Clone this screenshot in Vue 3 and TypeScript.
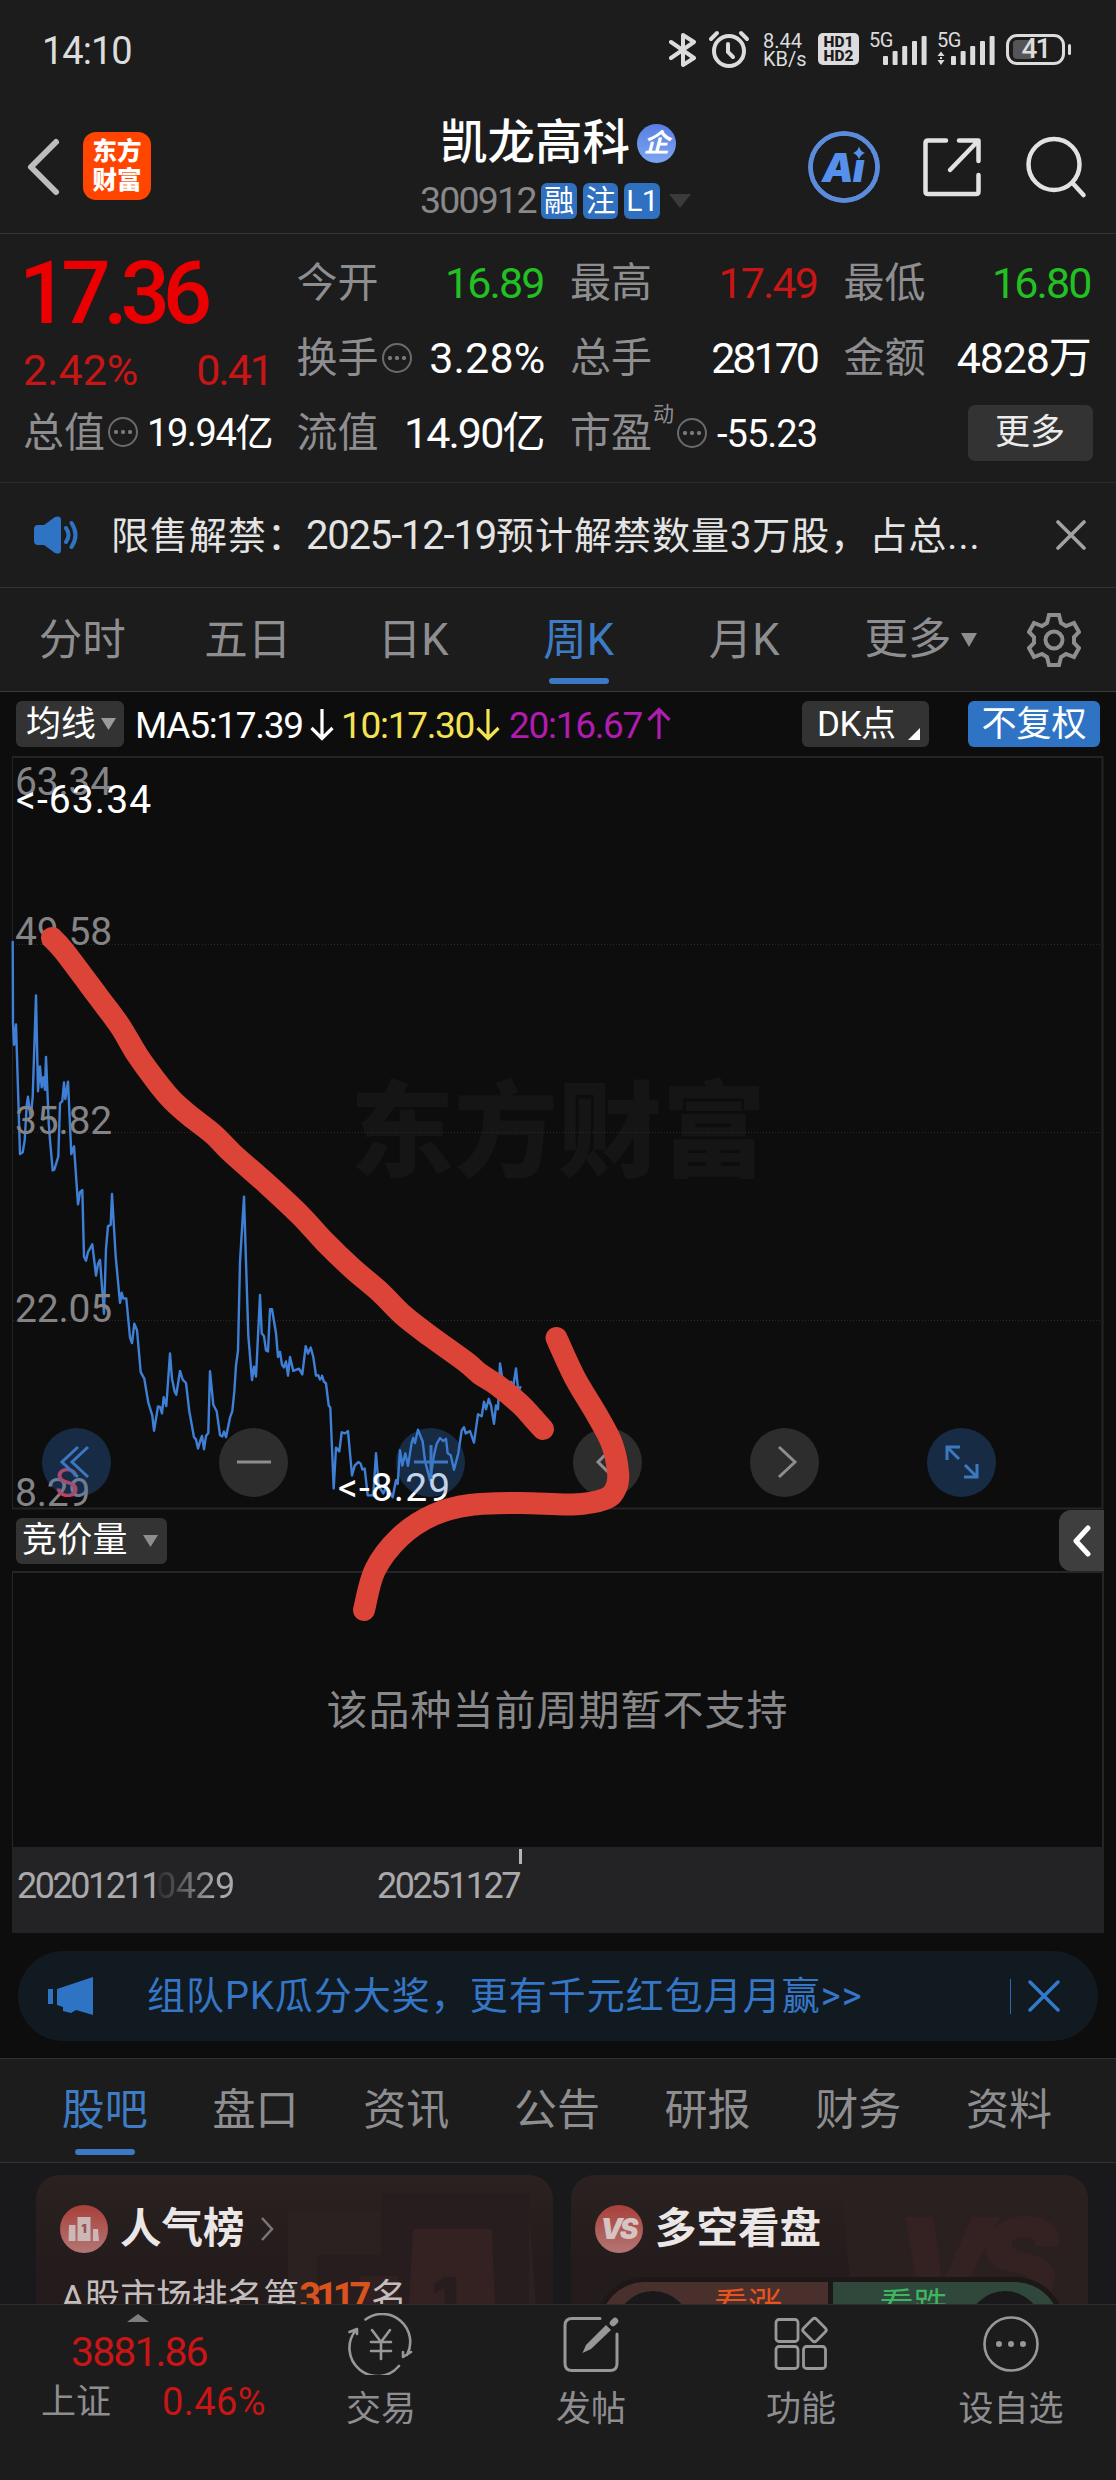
<script setup lang="ts">
type Point = [number, number]

interface Signal {
  arrows: boolean
}

const signals: Signal[] = [{ arrows: false }, { arrows: true }]
const periodTabs: string[] = ['分时', '五日', '日K', '周K', '月K']
const activePeriod = '周K'
const infoTabs: string[] = ['股吧', '盘口', '资讯', '公告', '研报', '财务', '资料']
const activeInfo = '股吧'

/* Price line, in chart pixels (origin at the chart's top-left corner, y 756) */
const firstHalf: Point[] = [
  [38, 141], [39, 330], [42, 380], [48, 333], [60, 632], [68, 628], [74, 600], [80, 520], [84, 500], [92, 548],
  [98, 500], [108, 266], [114, 487], [120, 430], [125, 478], [130, 455], [135, 484], [138, 408], [146, 560],
  [150, 600], [158, 670], [163, 668], [175, 638], [180, 515], [187, 510], [192, 467], [196, 505], [204, 465],
  [214, 632], [222, 614], [234, 748], [240, 720], [247, 715], [252, 868], [258, 878], [264, 858], [277, 840],
  [288, 912], [294, 885], [300, 876], [312, 1000], [318, 850], [324, 798], [332, 795], [336, 724], [347, 868],
  [360, 975], [365, 952], [370, 965], [379, 965], [390, 1055], [396, 1068], [403, 1023], [411, 1038], [422, 1135],
  [433, 1150], [445, 1205], [457, 1235], [462, 1270], [474, 1214], [480, 1215], [486, 1230], [491, 1193],
  [499, 1213], [510, 1092], [516, 1150], [524, 1180], [529, 1187], [540, 1132], [548, 1152], [558, 1160],
  [568, 1225], [582, 1285], [588, 1290], [594, 1311], [602, 1290], [606, 1282], [612, 1313], [618, 1282],
  [625, 1275], [630, 1133], [640, 1210], [650, 1225], [660, 1280], [667, 1283], [672, 1272], [678, 1285],
  [690, 1240], [697, 1225], [703, 1180], [708, 1120], [714, 1085], [720, 880], [732, 730], [738, 880],
  [745, 1050], [756, 1153], [762, 1122], [768, 1145], [780, 957], [785, 1045], [792, 1052], [798, 1085],
  [804, 1087], [810, 990], [816, 990], [828, 1045], [834, 1100], [840, 1088], [846, 1118], [852, 1124],
  [858, 1110], [864, 1143], [870, 1100], [880, 1132], [897, 1127], [907, 1140], [917, 1075], [924, 1092],
  [932, 1078], [940, 1100], [948, 1143], [955, 1142], [960, 1152], [966, 1146],
]
const secondHalf: Point[] = [
  [6, 877], [12, 893], [18, 897], [26, 955], [31, 960], [41, 1172], [48, 1065], [58, 1075], [65, 1025], [75, 1028],
  [84, 1022], [96, 1138], [104, 1112], [115, 1103], [122, 1107], [127, 1122], [134, 1120], [143, 1190],
  [160, 1190], [168, 1080], [176, 1165], [190, 1185], [200, 1165], [205, 1195], [212, 1185], [218, 1195],
  [228, 1150], [233, 1160], [240, 1072], [247, 1112], [256, 1080], [264, 1113], [275, 1052], [280, 1040],
  [285, 1053], [294, 1018], [308, 1050], [315, 1100], [330, 1150], [342, 1085], [350, 1055], [360, 1040],
  [370, 1048], [378, 1042], [383, 1080], [392, 1085], [402, 1123], [415, 1080], [425, 1020], [432, 1012],
  [437, 1028], [450, 1022], [462, 1052], [474, 978], [485, 983], [492, 945], [498, 965], [506, 938], [513, 955],
  [522, 1003], [528, 955], [534, 965], [540, 845], [548, 890], [560, 920], [573, 893], [580, 905], [588, 858],
  [595, 920], [602, 905],
]
const priceLine: string = [
  ...firstHalf.map(([x, y]): Point => [x / 3, 124 + y / 2.306]),
  ...secondHalf.map(([x, y]): Point => [320 + x / 3, 284 + y / 2.613]),
]
  .map(([x, y]) => `${x.toFixed(1)},${y.toFixed(1)}`)
  .join(' ')

const gridLines: number[] = [188, 376, 564]
const axisLabels = [
  { text: '63.34', y: 39 },
  { text: '49.58', y: 189 },
  { text: '35.82', y: 378 },
  { text: '22.05', y: 566 },
  { text: '8.29', y: 750 },
]

/* Catmull-Rom spline through the hand-drawn stroke's points */
function smooth(points: Point[]): string {
  let d = `M${points[0][0]} ${points[0][1]}`
  for (let i = 0; i < points.length - 1; i++) {
    const p0 = points[Math.max(i - 1, 0)]
    const p1 = points[i]
    const p2 = points[i + 1]
    const p3 = points[Math.min(i + 2, points.length - 1)]
    const c1 = [p1[0] + (p2[0] - p0[0]) / 6, p1[1] + (p2[1] - p0[1]) / 6]
    const c2 = [p2[0] - (p3[0] - p1[0]) / 6, p2[1] - (p3[1] - p1[1]) / 6]
    d += `C${c1[0].toFixed(1)} ${c1[1].toFixed(1)} ${c2[0].toFixed(1)} ${c2[1].toFixed(1)} ${p2[0]} ${p2[1]}`
  }
  return d
}
const arrowShaft = smooth([
  [52, 938], [64, 951], [97, 995], [120, 1026], [138, 1056], [160, 1086], [173, 1101], [190, 1116], [213, 1134],
  [233, 1154], [267, 1184], [300, 1215], [325, 1242], [353, 1269], [380, 1292], [403, 1315], [430, 1336],
  [466, 1362], [480, 1374], [497, 1385], [520, 1404], [533, 1418], [543, 1429],
])
const arrowHead = smooth([
  [556.5, 1338], [575, 1378], [597, 1415], [612, 1444], [618, 1472], [616, 1488], [605, 1499], [573, 1504.5],
  [520, 1503], [470, 1505], [433, 1515], [400, 1537], [375, 1570], [364, 1610],
])
</script>

<template>
  <div class="screen">
    <header class="status">
      <span class="clock">14:10</span>
      <div class="status-icons">
        <svg width="28" height="36" viewBox="0 0 28 36" fill="none" stroke="#dcdcdc" stroke-width="4" stroke-linejoin="round" stroke-linecap="round">
          <path d="M2 10 25 26 14 33V3L25 10 2 26" />
        </svg>
        <svg class="alarm" width="42" height="40" viewBox="0 0 42 40" fill="none" stroke="#dcdcdc" stroke-width="4" stroke-linecap="round">
          <circle cx="21" cy="22" r="15" />
          <path d="M20 15v8l5 5M3 10 9 4M39 10l-6-6" />
        </svg>
        <div class="speed"><span>8.44</span><span>KB/s</span></div>
        <div class="hd"><span>HD1</span><span>HD2</span></div>
        <div v-for="(s, i) in signals" :key="i" class="signal">
          <span class="net">5G</span>
          <svg width="58" height="34" viewBox="0 0 58 34" fill="#dcdcdc">
            <rect x="14" y="23" width="5" height="9" rx="1" />
            <rect x="23.6" y="18" width="5" height="14" rx="1" />
            <rect x="33.2" y="13" width="5" height="19" rx="1" />
            <rect x="43" y="8" width="5" height="24" rx="1" />
            <rect x="52.6" y="3" width="5" height="29" rx="1" />
            <path v-if="s.arrows" d="M.5 23 4 18.500 7.500 23zM.5 27 4 32 7.500 27zM3 24h2v2H3z" />
          </svg>
        </div>
        <div class="battery"><i></i><span>41</span></div>
      </div>
    </header>

    <div class="title-bar">
      <svg class="back" width="36" height="60" viewBox="0 0 36 60" fill="none" stroke="#bdbdbd" stroke-width="6" stroke-linecap="round" stroke-linejoin="round">
        <path d="M31 5 6 30 31 55" />
      </svg>
      <div class="logo"><span>东方</span><span>财富</span></div>
      <div class="stock">
        <div class="stock-name"><span>凯龙高科</span><i class="corp">企</i></div>
        <div class="stock-code">
          <span class="code">300912</span>
          <b class="tag">融</b><b class="tag">注</b><b class="tag">L1</b>
          <svg width="24" height="16" viewBox="0 0 24 16" fill="#3b3b3b"><path d="M1 1h22L12 15z" /></svg>
        </div>
      </div>
      <div class="actions">
        <svg width="74" height="74" viewBox="0 0 74 74">
          <circle cx="37" cy="37" r="33.500" fill="none" stroke="#5b8cdc" stroke-width="4.500" />
          <text x="15" y="52" class="ai">Ai</text>
          <path d="M44 13h20v16.500H44z" fill="#1c1c1c" />
          <path d="M52 16.500q1.500 5 6 6.500-4.500 1.500-6 6.500-1.500-5-6-6.500 4.500-1.500 6-6.500z" fill="#5590ec" />
          <circle cx="37" cy="37" r="33.500" fill="none" stroke="#5b8cdc" stroke-width="4.500" />
        </svg>
        <svg class="share" width="62" height="62" viewBox="0 0 62 62" fill="none" stroke="#e2e2e2" stroke-width="4.500" stroke-linecap="round" stroke-linejoin="round">
          <path d="M25 4.500H7q-2.500 0-2.500 2.500v48.500q0 2.500 2.500 2.500h48q2.500 0 2.500-2.500V39M38 4.500h19.500V25M56 6 29 34" />
        </svg>
        <svg class="search" width="62" height="66" viewBox="0 0 62 66" fill="none" stroke="#e2e2e2" stroke-width="4.500" stroke-linecap="round">
          <circle cx="29" cy="30.500" r="25.500" /><path d="m47.500 49 11 12" />
        </svg>
      </div>
    </div>

    <section class="quote">
      <div class="col main-col">
        <div class="price">17.36</div>
        <div class="row delta"><span>2.42%</span><span class="chg">0.41</span></div>
        <div class="row"><span class="label">总值</span><i class="more-dot"></i><span class="val small wan">19.94亿</span></div>
      </div>
      <div class="col">
        <div class="row"><span class="label">今开</span><span class="val down">16.89</span></div>
        <div class="row"><span class="label">换手</span><i class="more-dot"></i><span class="val pct">3.28%</span></div>
        <div class="row"><span class="label">流值</span><span class="val">14.90亿</span></div>
      </div>
      <div class="col">
        <div class="row"><span class="label">最高</span><span class="val up">17.49</span></div>
        <div class="row"><span class="label">总手</span><span class="val tight">28170</span></div>
        <div class="row"><span class="label">市盈</span><sup class="dyn">动</sup><i class="more-dot"></i><span class="val small">-55.23</span></div>
      </div>
      <div class="col">
        <div class="row"><span class="label">最低</span><span class="val down">16.80</span></div>
        <div class="row"><span class="label">金额</span><span class="val tight2">4828万</span></div>
        <div class="row end"><span class="more-btn">更多</span></div>
      </div>
    </section>

    <section class="notice">
      <svg class="speaker" width="44" height="38" viewBox="0 0 44 38" fill="#2f74c4">
        <path d="M4 9q-4 0-4 4v12q0 4 4 4h6l11 8q6 2 6-3V4q0-5-6-3L10 9z" />
        <path d="M32 12q5 7 0 14M37.500 7q8 12 0 24" fill="none" stroke="#2f74c4" stroke-width="4" stroke-linecap="round" />
      </svg>
      <p class="notice-text">限售解禁：<span class="date-num">2025-12-19</span>预计解禁数量<span>3</span>万股，占总...</p>
      <svg class="x" width="30" height="30" viewBox="0 0 30 30" stroke="#a2a2a2" stroke-width="3.600" stroke-linecap="round"><path d="m2 2 26 26M28 2 2 28" /></svg>
    </section>

    <nav class="periods">
      <span v-for="t in periodTabs" :key="t" class="period" :class="{ active: t === activePeriod }">{{ t }}</span>
      <span class="period more">更多<svg width="16" height="14" viewBox="0 0 16 14" fill="#8e8e91"><path d="M0 0h16L8 14z" /></svg></span>
      <svg class="gear" width="54" height="56" viewBox="0 0 54 56" fill="none" stroke="#8e8e91" stroke-width="4">
        <path d="M22 3h10l2 8 5 3 8-3 5 9-5 5v6l5 5-5 9-8-3-5 3-2 8H22l-2-8-5-3-8 3-5-9 5-5v-6l-5-5 5-9 8 3 5-3z" />
        <circle cx="27" cy="28" r="8.500" />
      </svg>
    </nav>

    <div class="ma-row">
      <span class="pill ma-pill">均线<svg width="15" height="12" viewBox="0 0 15 12" fill="#9b9b9d"><path d="M0 0h15L7.500 12z" /></svg></span>
      <span class="ma white">MA5:17.39</span>
      <svg class="arr" width="24" height="34" viewBox="0 0 24 34" stroke="#fff"><path d="M12 2v29M1.500 21 12 31.500 22.500 21" /></svg>
      <span class="ma yellow">10:17.30</span>
      <svg class="arr" width="24" height="34" viewBox="0 0 24 34" stroke="#f3e354"><path d="M12 2v29M1.500 21 12 31.500 22.500 21" /></svg>
      <span class="ma purple">20:16.67</span>
      <svg class="arr" width="24" height="34" viewBox="0 0 24 34" stroke="#b01cb0"><path d="M12 32V3M1.500 13 12 2.500 22.500 13" /></svg>
      <span class="pill dk">DK点<svg width="12" height="12" viewBox="0 0 12 12" fill="#fff"><path d="M12 0v12H0z" /></svg></span>
      <span class="pill adj">不复权</span>
    </div>

    <section class="chart">
      <svg width="1116" height="754" viewBox="0 0 1116 754">
        <text x="350" y="413" class="watermark">东方财富</text>
        <line v-for="y in gridLines" :key="y" x1="13" x2="1103" :y1="y + 0.5" :y2="y + 0.5" stroke="#2a2a2a" stroke-dasharray="1 2" />
        <path d="M12.500 752V1.500" fill="none" stroke="#242424" stroke-width="1" />
        <path d="M12 1h1090.500v751.500H12" fill="none" stroke="#242426" stroke-width="2" />
        <polyline :points="priceLine" fill="none" stroke="#3f80d6" stroke-width="2.400" stroke-linejoin="round" />
        <text v-for="a in axisLabels" :key="a.text" x="15" :y="a.y" class="axis">{{ a.text }}</text>
        <text x="16" y="57" class="mark">&lt;-63.34</text>
        <text x="338" y="745" class="mark">&lt;-8.29</text>
        <text x="55" y="741" class="sell">S</text>
      </svg>
      <div class="controls">
        <span class="ctl blue">
          <svg width="34" height="34" viewBox="0 0 34 34"><path d="M18 2 2 17l16 15M28 2 12 17l16 15" /></svg>
        </span>
        <span class="ctl"><svg width="34" height="34" viewBox="0 0 34 34"><path d="M0 17h34" /></svg></span>
        <span class="ctl blue"><svg width="34" height="34" viewBox="0 0 34 34"><path d="M0 17h34M17 0v34" /></svg></span>
        <span class="ctl"><svg width="34" height="34" viewBox="0 0 34 34"><path d="M22 2 7 17l15 15" /></svg></span>
        <span class="ctl"><svg width="34" height="34" viewBox="0 0 34 34"><path d="m11 2 16 15-16 15" /></svg></span>
        <span class="ctl blue"><svg width="34" height="34" viewBox="0 0 34 34"><path d="M14 14 2.500 2.500M2 15V2h13M20 20l11.500 11.500M32 19v13H19" /></svg></span>
      </div>
    </section>

    <div class="sub-row">
      <span class="pill sub-pill">竞价量<svg width="15" height="12" viewBox="0 0 15 12" fill="#8e8e90"><path d="M0 0h15L7.500 12z" /></svg></span>
      <span class="collapse"><svg width="18" height="32" viewBox="0 0 18 32" fill="none" stroke="#fff" stroke-width="5" stroke-linecap="round" stroke-linejoin="round"><path d="M15 3 3 16l12 13" /></svg></span>
    </div>
    <section class="sub-chart">该品种当前周期暂不支持</section>
    <div class="dates">
      <span class="d1">20201211</span><span class="d2">0429</span><span class="d3">20251127</span>
      <i class="tick"></i>
    </div>

    <aside class="banner">
      <svg class="horn" width="46" height="40" viewBox="0 0 46 40" fill="#2f74c4">
        <path d="M0 13h5v15H0zM9 13 45 1v38L28 34l-5 3-8-2v-4l-6-2z" />
      </svg>
      <span class="banner-text">组队PK瓜分大奖，更有千元红包月月赢&gt;&gt;</span>
      <i class="sep"></i>
      <svg width="32" height="32" viewBox="0 0 32 32" stroke="#3478c8" stroke-width="3.500" stroke-linecap="round"><path d="m2 2 28 28M30 2 2 30" /></svg>
    </aside>

    <nav class="info-tabs">
      <span v-for="t in infoTabs" :key="t" class="info-tab" :class="{ active: t === activeInfo }">{{ t }}</span>
    </nav>

    <section class="cards">
      <article class="card">
        <svg class="deco" width="517" height="130" viewBox="0 0 517 130">
          <path d="M252 37h94V18h146l8 112H252z" fill="#2b2120" />
          <path d="M281 80h64V18h148v112H281z" fill="#271d1e" />
          <path d="M377 54h79l3 76h-86z" fill="#342121" />
          <path d="M324 101h38v29h-38z" fill="#302020" />
          <text x="396" y="146" class="deco-one">1</text>
        </svg>
        <div class="card-head">
          <svg width="48" height="48" viewBox="0 0 48 48">
            <defs><linearGradient id="badge" x1="0" y1="0" x2="0" y2="1"><stop offset="0" stop-color="#a8403a" /><stop offset="1" stop-color="#b37674" /></linearGradient></defs>
            <circle cx="24" cy="24" r="24" fill="url(#badge)" />
            <path d="M9 20h6.500v16H8.500zM17.500 12h13v24h-13zM33 24h5l1 12h-6z" fill="#cbb8b6" />
            <text x="24" y="28" class="one">1</text>
          </svg>
          <h3>人气榜</h3>
          <svg class="chev" width="14" height="26" viewBox="0 0 14 26" fill="none" stroke="#7d7676" stroke-width="2.500"><path d="m2 2 10 11L2 24" /></svg>
        </div>
        <p class="rank">A股市场排名第<b>3117</b>名</p>
      </article>
      <article class="card">
        <svg class="deco" width="517" height="130" viewBox="0 0 517 130">
          <path d="M268 0H517v130H282z" fill="#2b2020" />
          <text x="322" y="134" class="deco-vs">VS</text>
        </svg>
        <div class="card-head">
          <svg width="48" height="48" viewBox="0 0 48 48">
            <circle cx="24" cy="24" r="24" fill="url(#badge)" />
            <text x="23" y="34" class="vs">VS</text>
          </svg>
          <h3>多空看盘</h3>
        </div>
        <div class="versus">
          <div class="bull"><i></i><span>看涨</span></div>
          <div class="bear"><span>看跌</span><i></i></div>
        </div>
      </article>
    </section>

    <footer class="bottom">
      <div class="index">
        <svg class="up-tri" width="22" height="8" viewBox="0 0 22 8" fill="#7e7e80"><path d="M0 8 11 0l11 8z" /></svg>
        <strong>3881.86</strong>
        <div class="index-row"><span>上证</span><em>0.46%</em></div>
      </div>
      <div class="item">
        <svg width="66" height="62" viewBox="0 0 66 62" fill="none" stroke="#98989a" stroke-width="2.600" stroke-linecap="round" stroke-linejoin="round">
          <path d="M17.500 6.500A28 28 0 0 1 59 42M63 39l-8 5V39M51 53A28 28 0 0 1 8 17M1.500 19l7.500-3v5" />
          <path d="m24 17 9 12 9-12M33 29v17M23 29h20M23 38h20" />
        </svg>
        <span>交易</span>
      </div>
      <div class="item">
        <svg width="66" height="62" viewBox="0 0 66 62" fill="none" stroke="#98989a" stroke-width="3" stroke-linecap="round" stroke-linejoin="round">
          <path d="M42 5.500H14q-7 0-7 7v38q0 7 7 7h38q7 0 7-7V21" />
          <path d="M24.500 40 28 32 48 12l5 5-20 19z" fill="#98989a" stroke="none" />
          <path d="m55 10 2-2" stroke-width="6.500" />
        </svg>
        <span>发帖</span>
      </div>
      <div class="item">
        <svg width="66" height="62" viewBox="0 0 66 62" fill="none" stroke="#98989a" stroke-width="2.800" stroke-linejoin="round">
          <rect x="8" y="6.500" width="22" height="22" rx="3" /><rect x="8" y="33.500" width="22" height="22" rx="3" />
          <rect x="35.500" y="33.500" width="22" height="22" rx="3" />
          <rect x="37.500" y="8" width="18" height="18" rx="2.500" transform="rotate(45 46.500 17)" />
        </svg>
        <span>功能</span>
      </div>
      <div class="item">
        <svg width="66" height="62" viewBox="0 0 66 62" fill="#98989a">
          <circle cx="33" cy="31" r="26.500" fill="none" stroke="#98989a" stroke-width="2.600" />
          <circle cx="21" cy="31" r="3" /><circle cx="33" cy="31" r="3" /><circle cx="45" cy="31" r="3" />
        </svg>
        <span>设自选</span>
      </div>
    </footer>

    <svg class="doodle" width="1116" height="1700" viewBox="0 0 1116 1700" fill="none" stroke="#dc4437" stroke-width="22" stroke-linecap="round" stroke-linejoin="round">
      <path :d="arrowShaft" /><path :d="arrowHead" />
    </svg>
  </div>
</template>

<style>
body {
  margin: 0;
  background: #1c1c1c;
}
</style>

<style scoped>
.screen {
  position: relative;
  box-sizing: border-box;
  width: 1116px;
  height: 2480px;
  overflow: hidden;
  display: flex;
  flex-direction: column;
  background: #0d0d0d;
  color: #fff;
  font-family: Roboto, 'Noto Sans CJK SC', sans-serif;
  line-height: 1;
  white-space: nowrap;
}
.screen * {
  box-sizing: border-box;
}
.screen > * {
  flex: none;
}
svg {
  display: block;
  flex: none;
}
i,
em {
  font-style: normal;
}

/* status bar */
.status {
  height: 100px;
  padding: 0 45px 0 42px;
  display: flex;
  align-items: center;
  justify-content: space-between;
  background: #1c1c1c;
  color: #dcdcdc;
}
.clock {
  padding-top: 2px;
  font-size: 38px;
  letter-spacing: -1px;
}
.status-icons {
  display: flex;
  align-items: center;
}
.alarm {
  margin: -3px 0 0 11px;
}
.speed {
  width: 42px;
  margin-left: 13px;
  font-size: 20px;
  display: flex;
  flex-direction: column;
  line-height: 18px;
}
.hd {
  width: 41px;
  height: 32px;
  margin: -2px 0 0 13px;
  border-radius: 5px;
  background: #dcdcdc;
  color: #1c1c1c;
  font-size: 15.5px;
  font-weight: 900;
  line-height: 14px;
  padding-top: 2px;
  display: flex;
  flex-direction: column;
  align-items: center;
}
.signal {
  position: relative;
  width: 58px;
  margin: -1px 0 0 10px;
}
.net {
  position: absolute;
  left: 0;
  top: -3px;
  font-size: 20px;
  letter-spacing: -0.5px;
}
.battery {
  position: relative;
  width: 59px;
  height: 31px;
  margin: -2px 6px 0 11px;
  border: 3px solid #dcdcdc;
  border-radius: 11px;
  font-size: 28px;
  font-weight: 500;
  display: flex;
  align-items: center;
  justify-content: center;
}
.battery::after {
  content: '';
  position: absolute;
  right: -9px;
  top: 7px;
  width: 3px;
  height: 11px;
  border-radius: 2px;
  background: #dcdcdc;
}
.battery i {
  position: absolute;
  left: 4px;
  top: 3px;
  width: 21px;
  height: 19px;
  border-radius: 4px;
  background: #555;
}
.battery span {
  position: relative;
  letter-spacing: -2px;
}

/* title bar */
.title-bar {
  height: 134px;
  border-bottom: 1px solid #343434;
  background: #1c1c1c;
  display: flex;
  align-items: center;
}
.back {
  margin-left: 25px;
}
.logo {
  width: 68px;
  height: 68px;
  margin: -1px 0 0 22px;
  border-radius: 13px;
  background: #ff4500;
  display: flex;
  flex-direction: column;
  align-items: center;
  justify-content: center;
  font-size: 24.5px;
  font-weight: 900;
  line-height: 29.5px;
}
.stock {
  width: 272px;
  margin-left: 269px;
  height: 132px;
  padding-top: 18px;
}
.stock-name {
  height: 50px;
  display: flex;
  align-items: center;
  padding-left: 20px;
  font-size: 47.5px;
  font-weight: 500;
}
.stock-name span {
  padding-top: 1px;
}
.corp {
  width: 39px;
  height: 39px;
  margin: -1px 0 0 7px;
  border-radius: 50%;
  background: linear-gradient(#5a7ee2, #7ca6f0);
  font-size: 26px;
  font-weight: 700;
  font-style: italic;
  line-height: 39px;
  text-align: center;
}
.stock-code {
  height: 40px;
  margin-top: 12px;
  display: flex;
  align-items: center;
}
.code {
  width: 122px;
  font-size: 37.5px;
  letter-spacing: -1.8px;
  color: #88888a;
}
.tag {
  width: 36px;
  height: 36px;
  margin-right: 6px;
  border-radius: 6px;
  background: #2f70c0;
  font-size: 30px;
  font-weight: 400;
  line-height: 36px;
  text-align: center;
  letter-spacing: -0.5px;
}
.stock-code svg {
  margin-left: 2px;
}
.actions {
  display: flex;
  align-items: center;
  margin-left: 115px;
}
.ai {
  font: italic 900 40px Inter, sans-serif;
  letter-spacing: -1px;
  fill: #5590ec;
}
.share {
  margin-left: 40px;
}
.search {
  margin-left: 42px;
}

/* quote */
.quote {
  height: 249px;
  padding-left: 23px;
  display: flex;
  gap: 26.5px;
  border-bottom: 1px solid #2b2b2b;
  background: #1c1c1c;
}
.col {
  width: 247px;
  padding-top: 11px;
}
.row {
  height: 75px;
  display: flex;
  align-items: center;
  font-size: 43px;
}
.col:not(.main-col) .row {
  padding-top: 2px;
}
.main-col {
  padding-top: 0;
}
.price {
  height: 118px;
  margin-left: -4px;
  font-size: 87px;
  font-weight: 500;
  line-height: 118px;
  letter-spacing: -7.2px;
  color: #ea0000;
}
.delta {
  height: 36px;
  justify-content: space-between;
  color: #c81515;
}
.chg {
  letter-spacing: -2px;
  margin-right: -2px;
}
.main-col .row:last-child {
  height: 90px;
}
.label {
  font-size: 41px;
  color: #8e8e91;
}
.val {
  margin-left: auto;
  letter-spacing: -1.9px;
}
.pct {
  letter-spacing: 0.2px;
  margin-right: -2px;
}
.tight {
  letter-spacing: -3px;
}
.tight2 {
  letter-spacing: -1.2px;
}
.small {
  font-size: 38px;
  letter-spacing: -1px;
}
.wan {
  letter-spacing: -1.4px;
  margin-right: -2px;
}
.up {
  color: #c81515;
}
.down {
  color: #22c022;
}
.more-dot {
  width: 30px;
  height: 30px;
  margin: -2px 0 0 3px;
  border: 2px solid #6b6b6d;
  border-radius: 50%;
  background: radial-gradient(circle at 6px 13px, #77777a 1.8px, transparent 2.4px),
    radial-gradient(circle at 13px 13px, #77777a 1.8px, transparent 2.4px),
    radial-gradient(circle at 20px 13px, #77777a 1.8px, transparent 2.4px);
}
.dyn {
  margin: -38px 0 0 1px;
  font-size: 21px;
  line-height: 21px;
  color: #8e8e91;
}
.end {
  justify-content: flex-end;
}
.more-btn {
  width: 125px;
  height: 56px;
  margin: -2px -2px 0 0;
  border-radius: 7px;
  background: #333;
  color: #ececec;
  font-size: 35px;
  line-height: 56px;
  text-align: center;
}

/* notice */
.notice {
  height: 105px;
  padding-left: 34px;
  display: flex;
  align-items: center;
  border-bottom: 1px solid #343434;
  background: #1c1c1c;
}
.notice-text {
  width: 908px;
  margin: 1px 0 0 33px;
  font-size: 38px;
  letter-spacing: 1px;
  color: #e4e4e4;
}
.date-num {
  font-size: 40px;
  letter-spacing: -1.2px;
}
.x {
  margin-left: 37px;
}

/* period tabs */
.periods {
  height: 104px;
  display: flex;
  align-items: center;
  border-bottom: 1px solid #3a3a3a;
  background: #1c1c1c;
}
.period {
  position: relative;
  width: 165.5px;
  height: 103px;
  line-height: 105px;
  text-align: center;
  font-size: 43.5px;
  text-indent: -1px;
  color: #8e8e91;
}
.period.active,
.info-tab.active {
  color: #3f7cc6;
}
.period.active::after,
.info-tab.active::after {
  content: '';
  position: absolute;
  left: 50%;
  bottom: 7px;
  width: 60px;
  height: 6px;
  margin-left: -30px;
  border-radius: 3px;
  background: #3b79c4;
}
.period.more {
  width: 150px;
  margin-left: 38px;
  display: flex;
  align-items: center;
  text-align: left;
}
.period.more svg {
  margin-left: 9px;
}
.gear {
  margin-left: 11px;
}

/* moving averages */
.ma-row {
  height: 64px;
  padding-left: 16px;
  display: flex;
  align-items: center;
}
.pill {
  height: 46px;
  border-radius: 6px;
  background: #333;
  font-size: 35px;
  display: flex;
  align-items: center;
}
.ma-pill {
  width: 108px;
  padding-left: 10px;
}
.ma-pill svg {
  margin-left: 5px;
}
.ma {
  padding-top: 2px;
  font-size: 37px;
  letter-spacing: -1.3px;
}
.white {
  width: 175px;
  margin-left: 11px;
}
.yellow {
  width: 135px;
  margin-left: 7px;
  color: #f3e354;
}
.purple {
  width: 138px;
  margin-left: 9px;
  color: #b01cb0;
}
.arr {
  fill: none;
  stroke-width: 3.2px;
}
.dk {
  width: 127px;
  margin-left: 131px;
  padding-left: 15px;
  letter-spacing: -0.5px;
}
.dk svg {
  align-self: flex-end;
  margin: 0 0 7px 13px;
}
.adj {
  width: 132px;
  margin-left: 39px;
  justify-content: center;
  background: #2f74c4;
}

/* chart */
.chart {
  position: relative;
  height: 754px;
}
.watermark {
  font: 900 104px 'Noto Sans CJK SC', sans-serif;
  fill: #151515;
}
.axis {
  font-size: 39px;
  letter-spacing: -0.2px;
  fill: #848486;
}
.mark {
  font-size: 39px;
  letter-spacing: 1.1px;
  fill: #fff;
}
.sell {
  font-size: 40px;
  fill: #d83a50;
}
.controls {
  position: absolute;
  left: 42px;
  top: 671.5px;
  display: flex;
  gap: 108px;
}
.ctl {
  width: 69px;
  height: 69px;
  border-radius: 50%;
  background: rgba(120, 120, 120, 0.3);
  display: flex;
  align-items: center;
  justify-content: center;
}
.ctl svg {
  fill: none;
  stroke: #8e8e90;
  stroke-width: 3px;
}
.ctl.blue {
  background: rgba(49, 114, 194, 0.3);
}
.ctl.blue svg {
  stroke: #3b78c0;
}

/* sub chart */
.sub-row {
  height: 61px;
  padding-left: 16px;
  display: flex;
  justify-content: space-between;
  align-items: center;
}
.sub-pill {
  width: 151px;
  padding-left: 6px;
  letter-spacing: 0.3px;
}
.sub-pill svg {
  margin-left: 15px;
}
.collapse {
  width: 45px;
  height: 61px;
  margin-right: 12px;
  border-radius: 12px 0 0 12px;
  background: #3e3e3e;
  display: flex;
  align-items: center;
  justify-content: center;
}
.sub-chart {
  height: 276px;
  margin: 0 12px;
  border: solid #262628;
  border-width: 2px 2px 0 1px;
  line-height: 276px;
  text-align: center;
  font-size: 41px;
  letter-spacing: 1px;
  color: #88888a;
}
.dates {
  position: relative;
  height: 86px;
  margin: 0 12px;
  padding-left: 5px;
  background: #232325;
  display: flex;
  align-items: center;
  padding-bottom: 9px;
  font-size: 36px;
  letter-spacing: -2.5px;
  color: #a9a9ab;
}
.d1 {
  width: 139px;
}
.d2 {
  width: 221px;
  letter-spacing: -0.6px;
  color: transparent;
  background: linear-gradient(90deg, #2a2a2c, #58585a 24px, #a9a9ab 60px);
  background-clip: text;
  -webkit-background-clip: text;
}
.tick {
  position: absolute;
  left: 507px;
  top: 2px;
  width: 3px;
  height: 15px;
  background: #b5b5b7;
}

/* banner */
.banner {
  height: 90px;
  margin: 18px 18px 17px;
  padding-left: 30px;
  border-radius: 45px;
  background: #111921;
  display: flex;
  align-items: center;
}
.banner-text {
  width: 863px;
  margin-left: 53px;
  font-size: 38px;
  letter-spacing: 1px;
  color: #3577c6;
}
.sep {
  width: 1px;
  height: 35px;
  margin-right: 17px;
  background: #2d68ad;
}

/* info tabs */
.info-tabs {
  height: 105px;
  padding-left: 30px;
  display: flex;
  border: solid #323234;
  border-width: 1px 0;
  background: #1c1c1c;
}
.info-tab {
  position: relative;
  width: 150.7px;
  line-height: 103px;
  text-align: center;
  font-size: 43px;
  text-indent: -1px;
  color: #8e8e91;
}

/* cards */
.cards {
  height: 141px;
  padding: 12px 27px 0 36px;
  display: flex;
  gap: 18px;
  overflow: hidden;
  background: #19191b;
}
.card {
  position: relative;
  width: 517px;
  height: 300px;
  border-radius: 24px;
  background: linear-gradient(#2a2120, #241b1c 90px);
  overflow: hidden;
}
.deco {
  position: absolute;
  left: 0;
  top: 0;
}
.deco-one {
  font: 900 60px Inter, sans-serif;
  fill: #281d1e;
}
.deco-vs {
  font: italic 900 126px Inter, sans-serif;
  letter-spacing: -18px;
  fill: #342121;
}
.card-head {
  position: relative;
  display: flex;
  align-items: center;
  padding: 30px 0 0 24px;
}
.card-head h3 {
  margin: 0 0 0 12px;
  font-size: 41.5px;
  font-weight: 700;
  color: #ebe7e7;
}
.chev {
  margin: 0 0 0 15px;
}
.one {
  font: 900 12px Inter, sans-serif;
  text-anchor: middle;
  fill: #8f5553;
}
.vs {
  font: italic 900 28px Inter, sans-serif;
  letter-spacing: -3px;
  text-anchor: middle;
  fill: #d6c4c2;
}
.rank {
  position: relative;
  margin: 25px 0 0 25px;
  font-size: 35.8px;
  color: #c3bdbd;
}
.rank b {
  font-size: 38px;
  letter-spacing: -5px;
  margin-right: 5px;
  color: #d9531e;
}
.versus {
  position: absolute;
  left: 24px;
  top: 102px;
  width: 470px;
  height: 100px;
  border: 5px solid #1e1717;
  border-radius: 50px;
  overflow: hidden;
  display: flex;
  gap: 5px;
  background: #1e1717;
  font-size: 34px;
}
.bull,
.bear {
  width: 230px;
  display: flex;
  align-items: flex-start;
}
.bull {
  background: #4a302d;
  color: #e8541e;
}
.bear {
  background: #2f483b;
  color: #3fb560;
}
.versus i {
  width: 74px;
  height: 74px;
  margin-top: 9px;
  border-radius: 50%;
  background: #19191b;
}
.bull i {
  margin-left: 16px;
}
.bull span {
  margin: 6px 0 0 24px;
}
.bear span {
  margin: 6px 20px 0 47px;
}

/* bottom bar */
.bottom {
  height: 176px;
  border-top: 1px solid #2e2e30;
  background: #1c1c1c;
  display: flex;
}
.index {
  width: 276px;
  padding-top: 9px;
  color: #c81515;
}
.up-tri {
  margin-left: 127px;
}
.index strong {
  display: block;
  margin: 10px 0 0 71px;
  font-size: 41px;
  font-weight: 400;
  letter-spacing: -1.9px;
}
.index-row {
  display: flex;
  align-items: center;
  margin: 10px 0 0 41px;
  font-size: 38px;
}
.index-row span {
  width: 121px;
  font-size: 35px;
  color: #8e8e91;
}
.index-row em {
  letter-spacing: 0.4px;
}
.item {
  width: 210px;
  padding-top: 8px;
  display: flex;
  flex-direction: column;
  align-items: center;
  font-size: 35px;
  color: #8e8e91;
}
.item span {
  margin-top: 17px;
}

/* hand-drawn mark over the chart */
.doodle {
  position: absolute;
  left: 0;
  top: 0;
  pointer-events: none;
}
</style>
